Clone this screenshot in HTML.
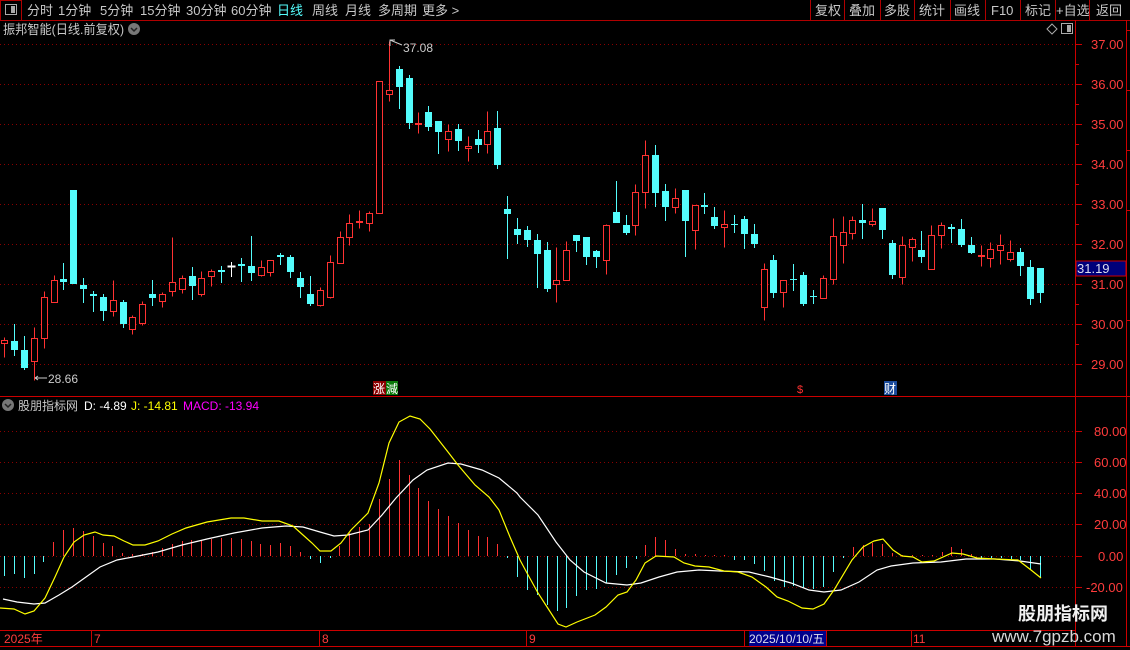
<!DOCTYPE html>
<html><head><meta charset="utf-8"><style>
html,body{margin:0;padding:0;background:#000;width:1130px;height:650px;overflow:hidden}
svg{display:block}
text{font-family:"Liberation Sans","Noto Sans CJK SC",sans-serif}
.r line{stroke:#ff3232}.r rect{fill:#000;stroke:#ff3232}
.c line{stroke:#54fcfc}.c rect{fill:#54fcfc}
.w line,.w rect{stroke:#fff;fill:#fff}
.g line{stroke:#8a0000;stroke-dasharray:1 3}
.ax text{fill:#ff3c3c;font-size:13px}
.tb text{fill:#c8c8c8;font-size:13px}
</style></head><body>
<svg width="1130" height="650" viewBox="0 0 1130 650">
<g shape-rendering="crispEdges">
<line x1="0" y1="20.5" x2="1130" y2="20.5" stroke="#b00000"/>
<rect x="0.5" y="0.5" width="21" height="20" fill="none" stroke="#b00000"/>
<rect x="5.5" y="4.5" width="11" height="10" fill="none" stroke="#aaa"/><rect x="11" y="6" width="4" height="7" fill="#aaa"/>
<g stroke="#b00000"><line x1="810.5" y1="0" x2="810.5" y2="20"/><line x1="844.5" y1="0" x2="844.5" y2="20"/><line x1="880.5" y1="0" x2="880.5" y2="20"/><line x1="914.5" y1="0" x2="914.5" y2="20"/><line x1="950.5" y1="0" x2="950.5" y2="20"/><line x1="985.5" y1="0" x2="985.5" y2="20"/><line x1="1020.5" y1="0" x2="1020.5" y2="20"/><line x1="1055.5" y1="0" x2="1055.5" y2="20"/><line x1="1089.5" y1="0" x2="1089.5" y2="20"/></g>
<g class="g">
<line x1="0" y1="44.5" x2="1075" y2="44.5"/><line x1="0" y1="84.5" x2="1075" y2="84.5"/><line x1="0" y1="124.5" x2="1075" y2="124.5"/><line x1="0" y1="164.5" x2="1075" y2="164.5"/><line x1="0" y1="204.5" x2="1075" y2="204.5"/><line x1="0" y1="244.5" x2="1075" y2="244.5"/><line x1="0" y1="284.5" x2="1075" y2="284.5"/><line x1="0" y1="324.5" x2="1075" y2="324.5"/><line x1="0" y1="364.5" x2="1075" y2="364.5"/>
<line x1="0" y1="431.5" x2="1075" y2="431.5"/><line x1="0" y1="462.5" x2="1075" y2="462.5"/><line x1="0" y1="493.5" x2="1075" y2="493.5"/><line x1="0" y1="524.5" x2="1075" y2="524.5"/><line x1="0" y1="556.5" x2="1075" y2="556.5"/><line x1="0" y1="587.5" x2="1075" y2="587.5"/>
</g>
</g>
<g class="tb">
<text x="27" y="15">分时</text><text x="58" y="15">1分钟</text><text x="100" y="15">5分钟</text><text x="140" y="15">15分钟</text><text x="186" y="15">30分钟</text><text x="231" y="15">60分钟</text><text x="277" y="15" style="fill:#54fcfc">日线</text><text x="312" y="15">周线</text><text x="345" y="15">月线</text><text x="378" y="15">多周期</text><text x="422" y="15">更多 &gt;</text>
<text x="815" y="15">复权</text><text x="849" y="15">叠加</text><text x="884" y="15">多股</text><text x="919" y="15">统计</text><text x="954" y="15">画线</text><text x="991" y="15">F10</text><text x="1025" y="15">标记</text><text x="1056" y="15">+自选</text><text x="1096" y="15">返回</text>
</g>
<text x="3" y="34" fill="#c8c8c8" font-size="13" textLength="121" lengthAdjust="spacingAndGlyphs">振邦智能(日线.前复权)</text>
<circle cx="134" cy="29" r="6" fill="#777"/><path d="M131 28l3 3 3-3" stroke="#222" stroke-width="1.5" fill="none"/>
<path d="M1047 29l5-5 5 5-5 5z" fill="none" stroke="#aaa"/>
<rect x="1061.5" y="23.5" width="11" height="10" fill="none" stroke="#aaa"/><rect x="1067" y="25" width="4" height="7" fill="#aaa"/>
<g shape-rendering="crispEdges">
<g class="r" transform="translate(0.5,0.5)">
<line x1="4" y1="337" x2="4" y2="357"/><rect x="1" y="340" width="6" height="3"/>
<line x1="34" y1="327" x2="34" y2="380"/><rect x="31" y="338" width="6" height="23"/>
<line x1="44" y1="291" x2="44" y2="348"/><rect x="41" y="297" width="6" height="41"/>
<line x1="54" y1="275" x2="54" y2="302"/><rect x="51" y="280" width="6" height="22"/>
<line x1="113" y1="280" x2="113" y2="316"/><rect x="110" y="300" width="6" height="11"/>
<line x1="132" y1="315" x2="132" y2="334"/><rect x="129" y="317" width="6" height="12"/>
<line x1="142" y1="301" x2="142" y2="325"/><rect x="139" y="304" width="6" height="19"/>
<line x1="162" y1="292" x2="162" y2="307"/><rect x="159" y="294" width="6" height="7"/>
<line x1="172" y1="237" x2="172" y2="296"/><rect x="169" y="282" width="6" height="9"/>
<line x1="182" y1="275" x2="182" y2="293"/><rect x="179" y="278" width="6" height="11"/>
<line x1="201" y1="271" x2="201" y2="296"/><rect x="198" y="278" width="6" height="16"/>
<line x1="211" y1="269" x2="211" y2="286"/><rect x="208" y="271" width="6" height="5"/>
<line x1="261" y1="260" x2="261" y2="276"/><rect x="258" y="267" width="6" height="8"/>
<line x1="270" y1="260" x2="270" y2="276"/><rect x="267" y="260" width="6" height="12"/>
<line x1="320" y1="287" x2="320" y2="306"/><rect x="317" y="290" width="6" height="15"/>
<line x1="330" y1="255" x2="330" y2="298"/><rect x="327" y="262" width="6" height="35"/>
<line x1="340" y1="231" x2="340" y2="263"/><rect x="337" y="237" width="6" height="26"/>
<line x1="349" y1="214" x2="349" y2="245"/><rect x="346" y="223" width="6" height="14"/>
<line x1="359" y1="210" x2="359" y2="228"/><rect x="356" y="221" width="6" height="1"/>
<line x1="369" y1="211" x2="369" y2="231"/><rect x="366" y="213" width="6" height="10"/>
<rect x="376" y="81" width="6" height="132"/>
<line x1="389" y1="41" x2="389" y2="101"/><rect x="386" y="90" width="6" height="4"/>
<line x1="418" y1="112" x2="418" y2="133"/><rect x="415" y="123" width="6" height="1"/>
<line x1="448" y1="124" x2="448" y2="151"/><rect x="445" y="131" width="6" height="8"/>
<line x1="468" y1="136" x2="468" y2="161"/><rect x="465" y="146" width="6" height="2"/>
<line x1="487" y1="111" x2="487" y2="153"/><rect x="484" y="131" width="6" height="13"/>
<line x1="556" y1="247" x2="556" y2="302"/><rect x="553" y="280" width="6" height="4"/>
<line x1="566" y1="241" x2="566" y2="280"/><rect x="563" y="250" width="6" height="30"/>
<line x1="606" y1="224" x2="606" y2="274"/><rect x="603" y="225" width="6" height="35"/>
<line x1="635" y1="184" x2="635" y2="235"/><rect x="632" y="192" width="6" height="33"/>
<line x1="645" y1="140" x2="645" y2="208"/><rect x="642" y="155" width="6" height="37"/>
<line x1="675" y1="188" x2="675" y2="213"/><rect x="672" y="198" width="6" height="9"/>
<line x1="695" y1="205" x2="695" y2="249"/><rect x="692" y="205" width="6" height="25"/>
<line x1="724" y1="210" x2="724" y2="247"/><rect x="721" y="224" width="6" height="3"/>
<line x1="764" y1="263" x2="764" y2="320"/><rect x="761" y="269" width="6" height="38"/>
<line x1="783" y1="280" x2="783" y2="307"/><rect x="780" y="280" width="6" height="12"/>
<line x1="823" y1="275" x2="823" y2="298"/><rect x="820" y="278" width="6" height="20"/>
<line x1="833" y1="218" x2="833" y2="284"/><rect x="830" y="236" width="6" height="43"/>
<line x1="843" y1="216" x2="843" y2="263"/><rect x="840" y="232" width="6" height="13"/>
<line x1="852" y1="216" x2="852" y2="239"/><rect x="849" y="220" width="6" height="13"/>
<line x1="872" y1="208" x2="872" y2="226"/><rect x="869" y="221" width="6" height="3"/>
<line x1="902" y1="236" x2="902" y2="284"/><rect x="899" y="245" width="6" height="32"/>
<line x1="912" y1="237" x2="912" y2="261"/><rect x="909" y="239" width="6" height="8"/>
<line x1="931" y1="225" x2="931" y2="269"/><rect x="928" y="235" width="6" height="34"/>
<line x1="941" y1="222" x2="941" y2="248"/><rect x="938" y="225" width="6" height="10"/>
<line x1="981" y1="245" x2="981" y2="266"/><rect x="978" y="255" width="6" height="1"/>
<line x1="990" y1="242" x2="990" y2="267"/><rect x="987" y="249" width="6" height="9"/>
<line x1="1000" y1="234" x2="1000" y2="264"/><rect x="997" y="245" width="6" height="5"/>
<line x1="1010" y1="240" x2="1010" y2="261"/><rect x="1007" y="252" width="6" height="7"/>
</g>
<g class="c" transform="translate(0.5,0)">
<line x1="14" y1="324" x2="14" y2="356"/><rect x="10.5" y="341" width="7" height="9"/>
<line x1="24" y1="336" x2="24" y2="370"/><rect x="20.5" y="350" width="7" height="18"/>
<line x1="63" y1="263" x2="63" y2="290"/><rect x="59.5" y="279" width="7" height="3"/>
<rect x="69.5" y="190" width="7" height="94"/>
<line x1="83" y1="278" x2="83" y2="303"/><rect x="79.5" y="285" width="7" height="4"/>
<line x1="93" y1="291" x2="93" y2="312"/><rect x="89.5" y="294" width="7" height="2"/>
<line x1="103" y1="294" x2="103" y2="321"/><rect x="99.5" y="297" width="7" height="14"/>
<line x1="123" y1="300" x2="123" y2="328"/><rect x="119.5" y="302" width="7" height="22"/>
<line x1="152" y1="280" x2="152" y2="306"/><rect x="148.5" y="294" width="7" height="4"/>
<line x1="192" y1="267" x2="192" y2="300"/><rect x="188.5" y="276" width="7" height="10"/>
<line x1="221" y1="266" x2="221" y2="283"/><rect x="217.5" y="270" width="7" height="2"/>
<line x1="241" y1="258" x2="241" y2="282"/><rect x="237.5" y="264" width="7" height="2"/>
<line x1="251" y1="236" x2="251" y2="281"/><rect x="247.5" y="266" width="7" height="7"/>
<line x1="280" y1="253" x2="280" y2="265"/><rect x="276.5" y="255" width="7" height="2"/>
<line x1="290" y1="255" x2="290" y2="278"/><rect x="286.5" y="257" width="7" height="15"/>
<line x1="300" y1="272" x2="300" y2="298"/><rect x="296.5" y="278" width="7" height="9"/>
<line x1="310" y1="276" x2="310" y2="306"/><rect x="306.5" y="294" width="7" height="10"/>
<line x1="399" y1="66" x2="399" y2="109"/><rect x="395.5" y="69" width="7" height="18"/>
<line x1="409" y1="75" x2="409" y2="129"/><rect x="405.5" y="78" width="7" height="45"/>
<line x1="428" y1="106" x2="428" y2="131"/><rect x="424.5" y="112" width="7" height="15"/>
<line x1="438" y1="121" x2="438" y2="154"/><rect x="434.5" y="121" width="7" height="11"/>
<line x1="458" y1="124" x2="458" y2="151"/><rect x="454.5" y="129" width="7" height="12"/>
<line x1="478" y1="130" x2="478" y2="153"/><rect x="474.5" y="139" width="7" height="6"/>
<line x1="497" y1="111" x2="497" y2="169"/><rect x="493.5" y="128" width="7" height="37"/>
<line x1="507" y1="196" x2="507" y2="259"/><rect x="503.5" y="209" width="7" height="5"/>
<line x1="517" y1="218" x2="517" y2="244"/><rect x="513.5" y="229" width="7" height="6"/>
<line x1="527" y1="226" x2="527" y2="247"/><rect x="523.5" y="230" width="7" height="10"/>
<line x1="537" y1="234" x2="537" y2="288"/><rect x="533.5" y="240" width="7" height="14"/>
<line x1="547" y1="242" x2="547" y2="292"/><rect x="543.5" y="250" width="7" height="39"/>
<line x1="576" y1="235" x2="576" y2="252"/><rect x="572.5" y="235" width="7" height="6"/>
<line x1="586" y1="237" x2="586" y2="265"/><rect x="582.5" y="237" width="7" height="20"/>
<line x1="596" y1="250" x2="596" y2="268"/><rect x="592.5" y="251" width="7" height="6"/>
<line x1="616" y1="181" x2="616" y2="223"/><rect x="612.5" y="212" width="7" height="11"/>
<line x1="626" y1="215" x2="626" y2="235"/><rect x="622.5" y="225" width="7" height="8"/>
<line x1="655" y1="145" x2="655" y2="207"/><rect x="651.5" y="155" width="7" height="38"/>
<line x1="665" y1="184" x2="665" y2="221"/><rect x="661.5" y="191" width="7" height="16"/>
<line x1="685" y1="190" x2="685" y2="257"/><rect x="681.5" y="190" width="7" height="31"/>
<line x1="704" y1="193" x2="704" y2="214"/><rect x="700.5" y="205" width="7" height="2"/>
<line x1="714" y1="207" x2="714" y2="229"/><rect x="710.5" y="217" width="7" height="9"/>
<line x1="734" y1="215" x2="734" y2="233"/><rect x="730.5" y="224" width="7" height="1"/>
<line x1="744" y1="216" x2="744" y2="249"/><rect x="740.5" y="219" width="7" height="15"/>
<line x1="754" y1="224" x2="754" y2="248"/><rect x="750.5" y="234" width="7" height="10"/>
<line x1="773" y1="255" x2="773" y2="298"/><rect x="769.5" y="260" width="7" height="33"/>
<line x1="793" y1="264" x2="793" y2="291"/><rect x="789.5" y="279" width="7" height="1"/>
<line x1="803" y1="272" x2="803" y2="306"/><rect x="799.5" y="275" width="7" height="29"/>
<line x1="813" y1="290" x2="813" y2="304"/><rect x="809.5" y="296" width="7" height="1"/>
<line x1="862" y1="204" x2="862" y2="239"/><rect x="858.5" y="220" width="7" height="3"/>
<line x1="882" y1="208" x2="882" y2="239"/><rect x="878.5" y="208" width="7" height="22"/>
<line x1="892" y1="240" x2="892" y2="279"/><rect x="888.5" y="243" width="7" height="32"/>
<line x1="921" y1="231" x2="921" y2="263"/><rect x="917.5" y="250" width="7" height="7"/>
<line x1="951" y1="224" x2="951" y2="243"/><rect x="947.5" y="227" width="7" height="2"/>
<line x1="961" y1="219" x2="961" y2="247"/><rect x="957.5" y="229" width="7" height="16"/>
<line x1="971" y1="237" x2="971" y2="254"/><rect x="967.5" y="245" width="7" height="8"/>
<line x1="1020" y1="248" x2="1020" y2="276"/><rect x="1016.5" y="252" width="7" height="14"/>
<line x1="1030" y1="260" x2="1030" y2="305"/><rect x="1026.5" y="267" width="7" height="32"/>
<line x1="1040" y1="268" x2="1040" y2="303"/><rect x="1036.5" y="268" width="7" height="25"/>
</g>
<g class="w" transform="translate(0.5,0)"><line x1="231" y1="262" x2="231" y2="277"/><rect x="227.5" y="266" width="7" height="1"/></g>
</g>
<path d="M390 46V40h5M390 40l12 5" stroke="#ccc" fill="none"/>
<text x="403" y="52" fill="#ccc" font-size="12">37.08</text>
<path d="M35 378h12M35 378l3-2M35 378l3 2" stroke="#ccc" fill="none"/>
<text x="48" y="383" fill="#ccc" font-size="12">28.66</text>
<rect x="373" y="381" width="13" height="14" fill="#8b0000"/><text x="373" y="393" fill="#fff" font-size="12">涨</text>
<rect x="386" y="381" width="12" height="14" fill="#0a7a0a"/><text x="386" y="393" fill="#fff" font-size="12">減</text>
<text x="797" y="393" fill="#ff3232" font-size="11">$</text>
<rect x="884" y="381" width="13" height="14" fill="#1a4a9a"/><text x="884" y="393" fill="#fff" font-size="12">财</text>
<line x1="0" y1="396.5" x2="1130" y2="396.5" stroke="#cc0000"/>
<circle cx="8" cy="405" r="6" fill="#777"/><path d="M5 404l3 3 3-3" stroke="#222" stroke-width="1.5" fill="none"/>
<text x="18" y="410" font-size="12" fill="#c8c8c8">股朋指标网</text>
<text x="84" y="410" font-size="12" fill="#fff">D: -4.89</text>
<text x="131" y="410" font-size="12" fill="#ffff00">J: -14.81</text>
<text x="183" y="410" font-size="12" fill="#ff00ff">MACD: -13.94</text>
<g shape-rendering="crispEdges">
<g stroke="#54fcfc">
<line x1="4.5" y1="556" x2="4.5" y2="576"/><line x1="14.5" y1="556" x2="14.5" y2="574"/><line x1="24.5" y1="556" x2="24.5" y2="578"/><line x1="34.5" y1="556" x2="34.5" y2="574"/><line x1="43.5" y1="556" x2="43.5" y2="562"/>
<line x1="310.5" y1="556" x2="310.5" y2="559"/><line x1="320.5" y1="556" x2="320.5" y2="563"/><line x1="330.5" y1="556" x2="330.5" y2="558"/>
<line x1="507.5" y1="556" x2="507.5" y2="558"/><line x1="517.5" y1="556" x2="517.5" y2="577"/><line x1="527.5" y1="556" x2="527.5" y2="590"/><line x1="537.5" y1="556" x2="537.5" y2="595"/><line x1="547.5" y1="556" x2="547.5" y2="605"/><line x1="557.5" y1="556" x2="557.5" y2="611"/><line x1="566.5" y1="556" x2="566.5" y2="608"/><line x1="576.5" y1="556" x2="576.5" y2="596"/><line x1="586.5" y1="556" x2="586.5" y2="590"/><line x1="596.5" y1="556" x2="596.5" y2="589"/><line x1="606.5" y1="556" x2="606.5" y2="583"/><line x1="616.5" y1="556" x2="616.5" y2="575"/><line x1="626.5" y1="556" x2="626.5" y2="568"/><line x1="636.5" y1="556" x2="636.5" y2="559"/>
<line x1="734.5" y1="556" x2="734.5" y2="560"/><line x1="744.5" y1="556" x2="744.5" y2="560"/><line x1="754.5" y1="556" x2="754.5" y2="564"/><line x1="764.5" y1="556" x2="764.5" y2="571"/><line x1="774.5" y1="556" x2="774.5" y2="581"/><line x1="784.5" y1="556" x2="784.5" y2="587"/><line x1="793.5" y1="556" x2="793.5" y2="586"/><line x1="803.5" y1="556" x2="803.5" y2="588"/><line x1="813.5" y1="556" x2="813.5" y2="589"/><line x1="823.5" y1="556" x2="823.5" y2="587"/><line x1="833.5" y1="556" x2="833.5" y2="572"/><line x1="843.5" y1="556" x2="843.5" y2="558"/>
<line x1="981.5" y1="556" x2="981.5" y2="558"/><line x1="991.5" y1="556" x2="991.5" y2="558"/><line x1="1001.5" y1="556" x2="1001.5" y2="558"/><line x1="1011.5" y1="556" x2="1011.5" y2="559"/><line x1="1020.5" y1="556" x2="1020.5" y2="560"/><line x1="1030.5" y1="556" x2="1030.5" y2="570"/><line x1="1040.5" y1="556" x2="1040.5" y2="578"/>
</g>
<g stroke="#ff3232">
<line x1="53.5" y1="556" x2="53.5" y2="542"/><line x1="63.5" y1="556" x2="63.5" y2="530"/><line x1="73.5" y1="556" x2="73.5" y2="528"/><line x1="83.5" y1="556" x2="83.5" y2="531"/><line x1="93.5" y1="556" x2="93.5" y2="536"/><line x1="103.5" y1="556" x2="103.5" y2="543"/><line x1="112.5" y1="556" x2="112.5" y2="546"/><line x1="122.5" y1="556" x2="122.5" y2="553"/><line x1="132.5" y1="556" x2="132.5" y2="554"/><line x1="142.5" y1="556" x2="142.5" y2="554"/><line x1="152.5" y1="556" x2="152.5" y2="552"/><line x1="162.5" y1="556" x2="162.5" y2="548"/><line x1="172.5" y1="556" x2="172.5" y2="544"/><line x1="182.5" y1="556" x2="182.5" y2="541"/><line x1="191.5" y1="556" x2="191.5" y2="540"/><line x1="201.5" y1="556" x2="201.5" y2="540"/><line x1="211.5" y1="556" x2="211.5" y2="539"/><line x1="221.5" y1="556" x2="221.5" y2="538"/><line x1="231.5" y1="556" x2="231.5" y2="538"/><line x1="241.5" y1="556" x2="241.5" y2="539"/><line x1="251.5" y1="556" x2="251.5" y2="541"/><line x1="260.5" y1="556" x2="260.5" y2="544"/><line x1="270.5" y1="556" x2="270.5" y2="545"/><line x1="280.5" y1="556" x2="280.5" y2="543"/><line x1="290.5" y1="556" x2="290.5" y2="546"/><line x1="300.5" y1="556" x2="300.5" y2="552"/>
<line x1="339.5" y1="556" x2="339.5" y2="546"/><line x1="349.5" y1="556" x2="349.5" y2="533"/><line x1="359.5" y1="556" x2="359.5" y2="527"/><line x1="369.5" y1="556" x2="369.5" y2="524"/><line x1="379.5" y1="556" x2="379.5" y2="499"/><line x1="389.5" y1="556" x2="389.5" y2="479"/><line x1="399.5" y1="556" x2="399.5" y2="460"/><line x1="409.5" y1="556" x2="409.5" y2="475"/><line x1="418.5" y1="556" x2="418.5" y2="488"/><line x1="428.5" y1="556" x2="428.5" y2="501"/><line x1="438.5" y1="556" x2="438.5" y2="509"/><line x1="448.5" y1="556" x2="448.5" y2="516"/><line x1="458.5" y1="556" x2="458.5" y2="523"/><line x1="468.5" y1="556" x2="468.5" y2="530"/><line x1="478.5" y1="556" x2="478.5" y2="536"/><line x1="487.5" y1="556" x2="487.5" y2="537"/><line x1="497.5" y1="556" x2="497.5" y2="544"/>
<line x1="645.5" y1="556" x2="645.5" y2="545"/><line x1="655.5" y1="556" x2="655.5" y2="537"/><line x1="665.5" y1="556" x2="665.5" y2="540"/><line x1="675.5" y1="556" x2="675.5" y2="549"/><line x1="685.5" y1="556" x2="685.5" y2="554"/><line x1="695.5" y1="556" x2="695.5" y2="554"/><line x1="705.5" y1="556" x2="705.5" y2="555"/><line x1="714.5" y1="556" x2="714.5" y2="555"/><line x1="724.5" y1="556" x2="724.5" y2="555"/>
<line x1="853.5" y1="556" x2="853.5" y2="547"/><line x1="863.5" y1="556" x2="863.5" y2="545"/><line x1="872.5" y1="556" x2="872.5" y2="543"/><line x1="882.5" y1="556" x2="882.5" y2="544"/><line x1="892.5" y1="556" x2="892.5" y2="553"/><line x1="902.5" y1="556" x2="902.5" y2="555"/><line x1="912.5" y1="556" x2="912.5" y2="555"/><line x1="922.5" y1="556" x2="922.5" y2="555"/><line x1="932.5" y1="556" x2="932.5" y2="555"/><line x1="942.5" y1="556" x2="942.5" y2="552"/><line x1="951.5" y1="556" x2="951.5" y2="547"/><line x1="961.5" y1="556" x2="961.5" y2="549"/><line x1="971.5" y1="556" x2="971.5" y2="554"/>
</g>
</g>
<g fill="none" stroke-width="1.2">
<polyline stroke="#fff" points="3,599 17,602 34,604 45,603 59,595 72,587 86,577 100,567 117,560 138,556 158,552 182,545 207,539 234,533 262,528 286,526 303,527 320,532 334,536 348,535 368,530 382,515 396,498 413,480 427,470 448,463 461,464 482,470 499,478 517,493 520,497 538,515 556,542 570,560 584,572 606,583 627,585 641,583 659,577 677,572 699,570 720,571 749,572 770,577 791,583 809,590 824,592 841,590 859,582 877,570 891,566 913,563 941,562 966,559 995,559 1020,561 1041,564"/>
<polyline stroke="#ffff00" points="0,608 14,609 25,614 34,611 45,598 55,577 64,557 74,542 84,535 95,532 103,535 114,536 124,541 133,545 145,545 158,541 172,534 186,528 207,522 231,518 244,518 262,521 279,521 293,526 303,535 312,543 320,551 331,551 341,543 351,530 368,513 379,483 389,443 399,422 410,416 420,419 430,429 448,452 458,465 475,485 489,497 499,510 510,537 520,560 527,573 538,593 549,610 558,624 566,627 577,622 595,615 606,607 618,595 627,592 636,580 645,563 656,556 674,557 684,563 695,566 709,567 724,571 738,572 752,577 766,587 777,597 788,601 802,608 813,609 824,604 834,590 852,560 863,547 874,541 883,539 893,550 902,556 913,557 922,562 934,561 952,553 963,554 977,558 995,559 1018,560 1031,570 1041,578"/>
</g>
<g shape-rendering="crispEdges">
<line x1="1075.5" y1="20" x2="1075.5" y2="646" stroke="#cc0000"/>
<line x1="1126.5" y1="20" x2="1126.5" y2="646" stroke="#cc0000"/>
<g stroke="#cc0000">
<line x1="1075" y1="44.5" x2="1082" y2="44.5"/><line x1="1075" y1="84.5" x2="1082" y2="84.5"/><line x1="1075" y1="124.5" x2="1082" y2="124.5"/><line x1="1075" y1="164.5" x2="1082" y2="164.5"/><line x1="1075" y1="204.5" x2="1082" y2="204.5"/><line x1="1075" y1="244.5" x2="1082" y2="244.5"/><line x1="1075" y1="284.5" x2="1082" y2="284.5"/><line x1="1075" y1="324.5" x2="1082" y2="324.5"/><line x1="1075" y1="364.5" x2="1082" y2="364.5"/>
<line x1="1075" y1="64.5" x2="1079" y2="64.5"/><line x1="1075" y1="104.5" x2="1079" y2="104.5"/><line x1="1075" y1="144.5" x2="1079" y2="144.5"/><line x1="1075" y1="184.5" x2="1079" y2="184.5"/><line x1="1075" y1="224.5" x2="1079" y2="224.5"/><line x1="1075" y1="304.5" x2="1079" y2="304.5"/><line x1="1075" y1="344.5" x2="1079" y2="344.5"/>
<line x1="1075" y1="431.5" x2="1082" y2="431.5"/><line x1="1075" y1="462.5" x2="1082" y2="462.5"/><line x1="1075" y1="493.5" x2="1082" y2="493.5"/><line x1="1075" y1="524.5" x2="1082" y2="524.5"/><line x1="1075" y1="556.5" x2="1082" y2="556.5"/><line x1="1075" y1="587.5" x2="1082" y2="587.5"/>
<line x1="1126" y1="30.5" x2="1130" y2="30.5"/><line x1="1126" y1="90.5" x2="1130" y2="90.5"/><line x1="1126" y1="150.5" x2="1130" y2="150.5"/><line x1="1126" y1="210.5" x2="1130" y2="210.5"/><line x1="1126" y1="320.5" x2="1130" y2="320.5"/>
</g>
<rect x="1076" y="261" width="50" height="15" fill="#00007a" stroke="#cc0000"/>
<line x1="0" y1="630.5" x2="1075" y2="630.5" stroke="#cc0000"/>
<line x1="0" y1="646.5" x2="1130" y2="646.5" stroke="#cc0000"/>
<g stroke="#cc0000"><line x1="91.5" y1="630" x2="91.5" y2="646"/><line x1="319.5" y1="630" x2="319.5" y2="646"/><line x1="526.5" y1="630" x2="526.5" y2="646"/><line x1="744.5" y1="630" x2="744.5" y2="646"/><line x1="826.5" y1="630" x2="826.5" y2="646"/><line x1="911.5" y1="630" x2="911.5" y2="646"/></g>
<rect x="749" y="631" width="77" height="15" fill="#00008b"/>
</g>
<g class="ax">
<text x="1091" y="49">37.00</text><text x="1091" y="89">36.00</text><text x="1091" y="129">35.00</text><text x="1091" y="169">34.00</text><text x="1091" y="209">33.00</text><text x="1091" y="249">32.00</text><text x="1091" y="289">31.00</text><text x="1091" y="329">30.00</text><text x="1091" y="369">29.00</text>
<text x="1094" y="436">80.00</text><text x="1094" y="467">60.00</text><text x="1094" y="498">40.00</text><text x="1094" y="529">20.00</text><text x="1098" y="561">0.00</text><text x="1086" y="592">-20.00</text>
</g>
<text x="1077" y="273" font-size="13" fill="#dde">31.19</text>
<g font-size="12" fill="#ff3c3c"><text x="4" y="643">2025年</text><text x="94" y="643">7</text><text x="322" y="643">8</text><text x="529" y="643">9</text><text x="913" y="643">11</text></g>
<text x="749" y="643" font-size="12" fill="#dde">2025/10/10/五</text>
<text x="1018" y="620" font-size="18" font-weight="bold" fill="#f0f0f0">股朋指标网</text>
<text x="992" y="642" font-size="17" fill="#d8d8d8">www.7gpzb.com</text>
</svg>
</body></html>
